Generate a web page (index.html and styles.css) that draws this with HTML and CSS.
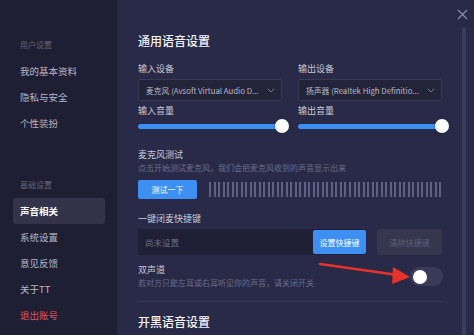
FILE: index.html
```html
<!DOCTYPE html>
<html lang="zh-CN">
<head>
<meta charset="utf-8">
<title>设置</title>
<link rel="stylesheet" href="styles.css">
</head>
<body>
<div class="app">
  <aside class="sidebar">
    <div class="group-label">用户设置</div>
    <div class="nav-item">我的基本资料</div>
    <div class="nav-item">隐私与安全</div>
    <div class="nav-item">个性装扮</div>
    <div class="group-label second">基础设置</div>
    <div class="nav-item active">声音相关</div>
    <div class="nav-item">系统设置</div>
    <div class="nav-item">意见反馈</div>
    <div class="nav-item">关于TT</div>
    <div class="nav-item logout">退出账号</div>
  </aside>
  <main class="main">
    <h1 class="title">通用语音设置</h1>
    <div class="cols">
      <div class="col">
        <div class="label">输入设备</div>
        <div class="select"><span class="select-text">麦克风 (Avsoft Virtual Audio D...</span><svg class="chev" width="8" height="5" viewBox="0 0 8 5"><path d="M0.8 0.8 L4 4 L7.2 0.8" fill="none" stroke="#7d7e98" stroke-width="1"/></svg></div>
        <div class="label vol">输入音量</div>
        <div class="slider"><div class="track"></div><div class="thumb"></div></div>
      </div>
      <div class="col">
        <div class="label">输出设备</div>
        <div class="select"><span class="select-text">扬声器 (Realtek High Definitio...</span><svg class="chev" width="8" height="5" viewBox="0 0 8 5"><path d="M0.8 0.8 L4 4 L7.2 0.8" fill="none" stroke="#7d7e98" stroke-width="1"/></svg></div>
        <div class="label vol">输出音量</div>
        <div class="slider"><div class="track"></div><div class="thumb"></div></div>
      </div>
    </div>

    <div class="label mic">麦克风测试</div>
    <div class="desc">点击开始测试麦克风，我们会把麦克风收到的声音显示出来</div>
    <div class="test-row">
      <button class="btn-blue test">测试一下</button>
      <div class="bars">
        <span></span><span></span><span></span><span></span><span></span><span></span><span></span><span></span><span></span><span></span>
        <span></span><span></span><span></span><span></span><span></span><span></span><span></span><span></span><span></span><span></span>
        <span></span><span></span><span></span><span></span><span></span><span></span><span></span><span></span><span></span><span></span>
        <span></span><span></span><span></span><span></span><span></span><span></span><span></span><span></span><span></span><span></span>
        <span></span><span></span><span></span><span></span><span></span><span></span><span></span><span></span><span></span><span></span>
        <span></span><span></span>
      </div>
    </div>

    <div class="label hk">一键闭麦快捷键</div>
    <div class="hotkey-row">
      <div class="hotkey-input"><span class="placeholder">尚未设置</span><button class="btn-blue set">设置快捷键</button></div>
      <button class="btn-clear">清除快捷键</button>
    </div>

    <div class="stereo-row">
      <div class="stereo-text">
        <div class="label">双声道</div>
        <div class="desc">若对方只能左耳或右耳听见你的声音，请关闭开关</div>
      </div>
      <div class="toggle"><div class="knob"></div></div>
    </div>
    <div class="divider"></div>
    <h2 class="title second">开黑语音设置</h2>

    <svg class="close" width="11" height="11" viewBox="0 0 11 11"><path d="M1 1 L10 10 M10 1 L1 10" stroke="#8a8ba6" stroke-width="1.2"/></svg>
    <div class="scrollbar"></div>
    <svg class="arrow" width="100" height="30" viewBox="0 0 100 30"><path d="M2 3 L80 14" stroke="#e8322b" stroke-width="2.4" stroke-linecap="round"/><path d="M92 16 L75 6 L74 23 Z" fill="#e8322b"/></svg>
  </main>
</div>
</body>
</html>
```

FILE: styles.css
```css
* { box-sizing: border-box; margin: 0; padding: 0; }
html, body { width: 474px; height: 335px; overflow: hidden; }
body {
  background: #292a47;
  font-family: "Noto Sans CJK SC", "Noto Sans", sans-serif;
  color: #c4c5d6;
}
.app { display: flex; width: 474px; height: 335px; }

.sidebar {
  width: 117px;
  flex: none;
  background: #1f1f33;
  padding-top: 35px;
  display: flex;
  flex-direction: column;
}
.group-label {
  font-size: 8px;
  line-height: 20px;
  height: 20px;
  color: #64657c;
  padding-left: 20px;
  margin-bottom: 3px;
}
.group-label.second { margin-top: 39px; }
.nav-item {
  height: 26px;
  line-height: 26px;
  font-size: 9.5px;
  color: #b5b6c6;
  padding-left: 20px;
}
.nav-item.active {
  margin: 0 12px 0 13px;
  padding-left: 7px;
  background: #33344a;
  border-radius: 3px;
  color: #ffffff;
  font-weight: 700;
}
.nav-item.logout { color: #e2545c; }

.main {
  position: relative;
  flex: 1;
  padding: 31px 0 0 21px;
  width: 357px;
}
.title {
  font-size: 12px;
  line-height: 20px;
  font-weight: 500;
  color: #f2f2f8;
}
.title.second { margin-top: 10px; }
.cols {
  display: flex;
  gap: 16px;
  width: 304px;
  margin-top: 11px;
}
.col { width: 144px; }
.label {
  font-size: 9px;
  line-height: 14px;
  color: #c8c9d8;
}
.select {
  margin-top: 3px;
  height: 22px;
  border: 1px solid #3a3b57;
  background: #232439;
  border-radius: 2px;
  display: flex;
  align-items: center;
  justify-content: space-between;
  padding: 0 6px 0 7px;
}
.select-text {
  font-size: 7.8px;
  color: #b8b9c9;
  white-space: nowrap;
}
.chev { flex: none; margin-left: 4px; }
.label.vol { margin-top: 3px; }
.slider {
  position: relative;
  height: 16px;
  display: flex;
  align-items: center;
}
.track {
  width: 144px;
  height: 5px;
  border-radius: 3px;
  background: #3b8ef2;
}
.thumb {
  position: absolute;
  right: -7px;
  top: 1px;
  width: 14px;
  height: 14px;
  border-radius: 50%;
  background: #ffffff;
  box-shadow: 0 0 2px rgba(0,0,0,0.3);
}

.label.mic { margin-top: 14px; }
.desc {
  font-size: 8px;
  line-height: 11px;
  color: #6c6d88;
  white-space: nowrap;
}
.test-row {
  margin-top: 7px;
  display: flex;
  align-items: center;
  width: 304px;
}
.btn-blue {
  border: none;
  background: #3d8ff2;
  color: #ffffff;
  font-family: inherit;
  font-size: 8px;
  border-radius: 2px;
}
.test { width: 59px; height: 19px; }
.bars {
  margin-left: 12px;
  flex: 1;
  height: 15px;
  display: flex;
  justify-content: space-between;
}
.bars span {
  width: 2px;
  height: 15px;
  background: #5f6082;
}

.label.hk { margin-top: 13px; }
.hotkey-row {
  margin-top: 3px;
  display: flex;
  align-items: center;
  width: 304px;
}
.hotkey-input {
  width: 228px;
  height: 26px;
  background: #1f2036;
  border-radius: 2px;
  display: flex;
  align-items: center;
  justify-content: space-between;
  padding-left: 7px;
}
.placeholder { font-size: 8.5px; color: #6d6e86; }
.set { width: 53px; height: 24px; }
.btn-clear {
  margin-left: 11px;
  width: 65px;
  height: 26px;
  border: none;
  border-radius: 2px;
  background: #36374f;
  color: #5e5f78;
  font-family: inherit;
  font-size: 8px;
}

.stereo-row {
  margin-top: 8px;
  width: 305px;
  display: flex;
  align-items: center;
  justify-content: space-between;
}
.toggle {
  width: 33px;
  height: 19px;
  border-radius: 10px;
  background: #3a3b59;
  position: relative;
  margin-top: 2px;
}
.knob {
  position: absolute;
  left: 3px;
  top: 2.5px;
  width: 14px;
  height: 14px;
  border-radius: 50%;
  background: #ffffff;
}
.divider {
  margin-top: 13px;
  width: 305px;
  height: 1px;
  background: #3a3b58;
}

.close { position: absolute; right: 6px; top: 9px; }
.scrollbar {
  position: absolute;
  left: 345px;
  top: 27px;
  width: 4px;
  height: 310px;
  border-radius: 2px;
  background: #3a3b5d;
}
.arrow { position: absolute; left: 201px; top: 261px; }
```
